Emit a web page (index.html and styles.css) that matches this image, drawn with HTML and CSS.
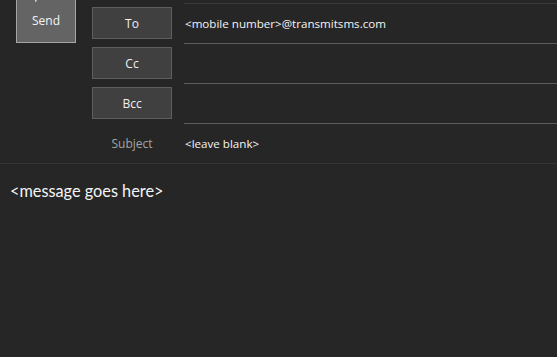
FILE: index.html
```html
<!DOCTYPE html>
<html>
<head>
<meta charset="utf-8">
<link rel="stylesheet" href="styles.css">
</head>
<body>
<div class="header">
  <div class="send-col">
    <div class="send-btn">
      <svg class="send-icon" width="8" height="3" viewBox="0 0 8 3"><path d="M1 0 L3 0 L2 2 L1 2 Z" fill="#c8c8c8"/></svg>
      <span>Send</span>
    </div>
  </div>
  <div class="fields">
    <div class="row first">
      <div class="btn">To</div>
      <div class="value">&lt;mobile number&gt;@transmitsms.com</div>
    </div>
    <div class="row">
      <div class="btn">Cc</div>
      <div class="value"></div>
    </div>
    <div class="row">
      <div class="btn">Bcc</div>
      <div class="value"></div>
    </div>
    <div class="row subject">
      <div class="label">Subject</div>
      <div class="value">&lt;leave blank&gt;</div>
    </div>
  </div>
</div>
<div class="message">&lt;message goes here&gt;</div>
</body>
</html>
```
FILE: styles.css
```css
html, body {
  margin: 0;
  padding: 0;
  background: #262626;
  height: 100%;
}
body {
  font-family: "Open Sans", "Noto Sans", sans-serif;
  color: #f0f0f0;
  overflow: hidden;
}
.header {
  display: flex;
  height: 163px;
  border-bottom: 1px solid #363636;
}
.send-col {
  width: 76px;
  padding-left: 16px;
  flex: none;
}
.send-btn {
  position: relative;
  width: 58px;
  height: 42px;
  background: #646464;
  border: 1px solid #a6a6a6;
  border-top: none;
  display: flex;
  align-items: center;
  justify-content: center;
  font-size: 12px;
  color: #f4f4f4;
}
.send-btn span {
  margin-top: -1px;
}
.send-icon {
  position: absolute;
  top: 0;
  left: 17px;
}
.fields {
  flex: 1;
  padding-top: 3px;
}
.row {
  display: grid;
  grid-template-columns: 80px 1fr;
  column-gap: 12px;
  height: 40px;
}
.row.first {
  height: 41px;
}
.btn {
  box-sizing: border-box;
  height: 32px;
  margin-top: 3px;
  background: #404040;
  border: 1px solid #5e5e5e;
  display: flex;
  align-items: center;
  justify-content: center;
  font-size: 12px;
  color: #f0f0f0;
}
.row.first .btn {
  margin-top: 4px;
}
.value {
  box-sizing: border-box;
  border-bottom: 1px solid #5c5c5c;
  display: flex;
  align-items: center;
  padding-left: 1px;
  font-size: 11.6px;
  color: #f4f4f4;
}
.row.first .value {
  border-top: 1px solid #3a3a3a;
}
.row.subject {
  height: 39px;
}
.row.subject .value {
  border-bottom: none;
}
.label {
  display: flex;
  align-items: center;
  justify-content: center;
  font-size: 12px;
  color: #a4a4a4;
}
.message {
  padding: 17px 0 0 10px;
  font-family: "Lato", sans-serif;
  font-size: 16.3px;
  color: #f4f4f4;
}
```
